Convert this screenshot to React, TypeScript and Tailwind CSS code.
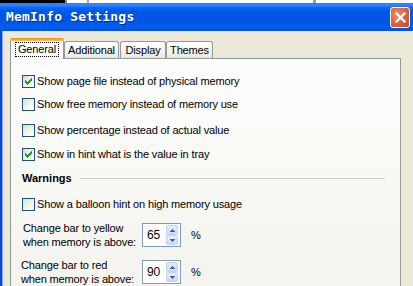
import React from "react";

const bodyFont = { fontFamily: '"Liberation Sans", Arial, sans-serif' };

function CheckBox({ checked }: { checked: boolean }) {
  return (
    <div className="w-[13px] h-[13px] border border-[#1c5180] bg-[linear-gradient(135deg,#dcdcd7_0%,#ececE6_35%,#f8f8f5_70%,#ffffff_100%)] flex items-center justify-center shrink-0">
      {checked && (
        <svg width="7" height="7" viewBox="0 0 7 7" shapeRendering="crispEdges">
          <path d="M6 0h1v3h-1z M5 1h1v3h-1z M4 2h1v3h-1z M3 3h1v3h-1z M2 4h1v3h-1z M1 3h1v3h-1z M0 2h1v3h-1z" fill="#21a121" />
        </svg>
      )}
    </div>
  );
}

function Row({ checked, label, className }: { checked: boolean; label: string; className: string }) {
  return (
    <div className={`flex items-center gap-[2px] h-[13px] ${className}`}>
      <CheckBox checked={checked} />
      <span className="leading-[13px] whitespace-nowrap">{label}</span>
    </div>
  );
}

function Arrow({ up }: { up: boolean }) {
  return (
    <svg width="5" height="3" viewBox="0 0 5 3" shapeRendering="crispEdges">
      {up ? (
        <path d="M2 0h1v1h-1z M1 1h3v1h-3z M0 2h5v1h-5z" fill="#4d6185" />
      ) : (
        <path d="M0 0h5v1h-5z M1 1h3v1h-3z M2 2h1v1h-1z" fill="#4d6185" />
      )}
    </svg>
  );
}

function Spin({ value }: { value: string }) {
  return (
    <div className="w-[39px] h-[24px] border border-[#7f9db9] bg-white flex items-center pl-[4px] pr-[2px] shrink-0">
      <span className="flex-1 text-[12px] leading-[14px]">{value}</span>
      <div className="flex flex-col w-[12px] h-[20px]">
        <div className="flex-1 rounded-[2px] border border-[#c3d1f3] bg-[linear-gradient(180deg,#e6eeff_0%,#c9d8fc_100%)] flex items-center justify-center">
          <Arrow up={true} />
        </div>
        <div className="flex-1 rounded-[2px] border border-[#c3d1f3] bg-[linear-gradient(180deg,#e6eeff_0%,#c9d8fc_100%)] flex items-center justify-center">
          <Arrow up={false} />
        </div>
      </div>
    </div>
  );
}

function Tab({ label, className }: { label: string; className: string }) {
  return (
    <div
      className={`h-[17px] mt-[3px] border border-b-0 border-[#919b9c] rounded-t-[3px] bg-[linear-gradient(180deg,#ffffff_0%,#f3f3ef_60%,#e8e7df_100%)] flex items-center justify-center leading-[13px] ${className}`}
    >
      {label}
    </div>
  );
}

export default function App() {
  return (
    <div
      className="w-[413px] h-[286px] overflow-hidden bg-[#ece9d8] flex flex-col text-[11px] tracking-[-0.15px] text-black"
      style={bodyFont}
    >
      <div className="h-[3px] flex shrink-0">
        <div className="w-[65px] bg-black" />
        <div className="w-[2px] bg-[#8e8e8e]" />
        <div className="w-[20px] bg-white" />
        <div className="w-[2px] bg-[#a8a8a8]" />
        <div className="w-[224px] bg-white" />
        <div className="w-[3px] bg-[#9c9c9c]" />
        <div className="flex-1 bg-white" />
      </div>

      <div className="h-[28px] shrink-0 flex items-center pl-[6px] pr-[3px] bg-[linear-gradient(180deg,#2b7cf5_0%,#2f85ff_8%,#0a6af8_16%,#0058e8_28%,#0054e3_50%,#0057ea_70%,#005ef2_85%,#0050d8_100%)]">
        <span
          className="text-white font-bold text-[13px] tracking-[0.2px] [text-shadow:1px_1px_0_#0a2a8a]"
          style={{ fontFamily: '"DejaVu Sans Mono", "Liberation Mono", monospace' }}
        >
          MemInfo Settings
        </span>
        <div className="ml-auto w-[20px] h-[21px] rounded-[3px] border border-white bg-[radial-gradient(circle_at_35%_35%,#f0906c_0%,#e0653f_45%,#c84a26_100%)] flex items-center justify-center">
          <svg width="11" height="11" viewBox="0 0 11 11">
            <path d="M1.5 1.5 L9.5 9.5 M9.5 1.5 L1.5 9.5" stroke="white" strokeWidth="2.2" strokeLinecap="square" />
          </svg>
        </div>
      </div>

      <div className="flex flex-1 min-h-0">
        <div className="w-[2px] bg-[#0a48d8] shrink-0" />
        <div className="w-[1px] bg-[#8ea6e2] shrink-0" />
        <div className="flex-1 pl-[7px] pt-[7px] flex flex-col min-h-0">
          <div className="flex items-start h-[21px] relative z-10 shrink-0">
            <div className="w-[54px] h-[21px] bg-white border-x border-[#919b9c] rounded-t-[3px] flex flex-col">
              <div className="h-[3px] rounded-t-[3px] bg-[linear-gradient(180deg,#e68b2c_0%,#ffc73c_100%)] -mx-[1px]" />
              <div className="flex-1 flex items-start justify-center pt-[1px]">
                <span className="border border-dotted border-black px-[2px] leading-[13px]">General</span>
              </div>
            </div>
            <Tab label="Additional" className="w-[55px]" />
            <Tab label="Display" className="w-[46px] ml-[1px]" />
            <Tab label="Themes" className="w-[47px]" />
          </div>
          <div className="-mt-[1px] mr-[12px] flex-1 min-h-0 border border-b-0 border-[#919b9c] bg-[linear-gradient(180deg,#fdfdfd_0%,#f9f9f6_40%,#f4f3ee_100%)] pl-[11px] pt-[16px] flex flex-col">
            <Row checked={true} label="Show page file instead of physical memory" className="" />
            <Row checked={false} label="Show free memory instead of memory use" className="mt-[10px]" />
            <Row checked={false} label="Show percentage instead of actual value" className="mt-[13px]" />
            <Row checked={true} label="Show in hint what is the value in tray" className="mt-[11px]" />

            <div className="flex items-center mt-[11px] h-[13px]">
              <span className="font-bold leading-[13px] tracking-[0px]">Warnings</span>
              <div className="flex-1 ml-[8px] mr-[15px] h-[1px] bg-[#d0d0bf]" />
            </div>

            <Row checked={false} label="Show a balloon hint on high memory usage" className="mt-[13px]" />

            <div className="flex items-center mt-[10px] ml-[1px]">
              <div className="w-[119px] leading-[14px]">
                <div>Change bar to yellow</div>
                <div>when memory is above:</div>
              </div>
              <Spin value="65" />
              <span className="ml-[10px]">%</span>
            </div>

            <div className="flex items-center mt-[9px] -ml-[1px]">
              <div className="w-[121px] leading-[14px]">
                <div>Change bar to red</div>
                <div>when memory is above:</div>
              </div>
              <Spin value="90" />
              <span className="ml-[10px]">%</span>
            </div>
          </div>
        </div>
      </div>
    </div>
  );
}
